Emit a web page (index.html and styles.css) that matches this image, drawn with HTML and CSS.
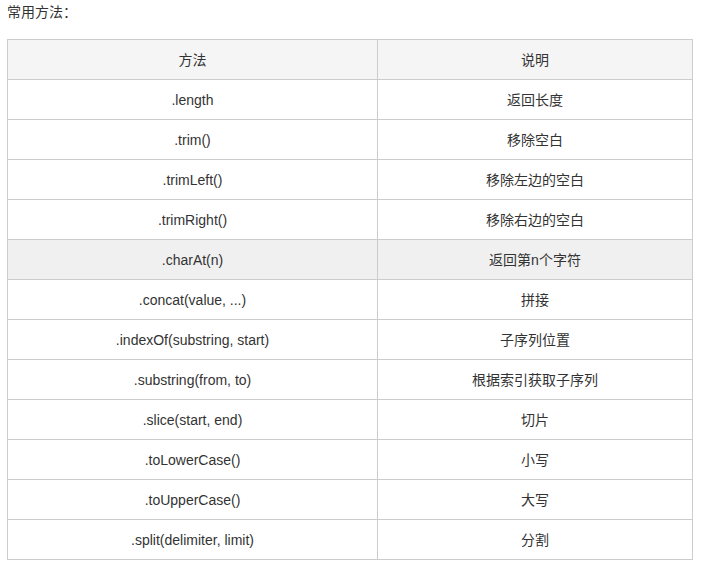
FILE: index.html
```html
<!DOCTYPE html>
<html>
<head>
<meta charset="utf-8">
<link rel="stylesheet" href="styles.css">
</head>
<body>
<p class="title">常用方法：</p>
<table class="methods">
<thead>
<tr><th>方法</th><th>说明</th></tr>
</thead>
<tbody>
<tr><td>.length</td><td>返回长度</td></tr>
<tr><td>.trim()</td><td>移除空白</td></tr>
<tr><td>.trimLeft()</td><td>移除左边的空白</td></tr>
<tr><td>.trimRight()</td><td>移除右边的空白</td></tr>
<tr class="hover"><td>.charAt(n)</td><td>返回第n个字符</td></tr>
<tr><td>.concat(value, ...)</td><td>拼接</td></tr>
<tr><td>.indexOf(substring, start)</td><td>子序列位置</td></tr>
<tr><td>.substring(from, to)</td><td>根据索引获取子序列</td></tr>
<tr><td>.slice(start, end)</td><td>切片</td></tr>
<tr><td>.toLowerCase()</td><td>小写</td></tr>
<tr><td>.toUpperCase()</td><td>大写</td></tr>
<tr><td>.split(delimiter, limit)</td><td>分割</td></tr>
</tbody>
</table>
</body>
</html>
```
FILE: styles.css
```css
html, body {
  margin: 0;
  padding: 0;
  background: #fff;
}
body {
  padding: 0 7px;
  font-family: "Liberation Sans", Arial, "Noto Sans CJK SC", sans-serif;
  font-size: 14px;
  color: #333;
}
.title {
  margin: 0;
  padding-top: 3px;
  height: 36px;
  line-height: 18px;
}
.methods {
  border-collapse: collapse;
  width: 686px;
  table-layout: fixed;
}
.methods th, .methods td {
  border: 1px solid #ccc;
  height: 39px;
  padding: 0;
  text-align: center;
  vertical-align: middle;
  font-weight: normal;
  line-height: 18px;
}
.methods th:first-child, .methods td:first-child {
  width: 369px;
}
.methods thead tr {
  background: #f5f5f5;
}
.methods tr.hover {
  background: #f0f0f0;
}
```
